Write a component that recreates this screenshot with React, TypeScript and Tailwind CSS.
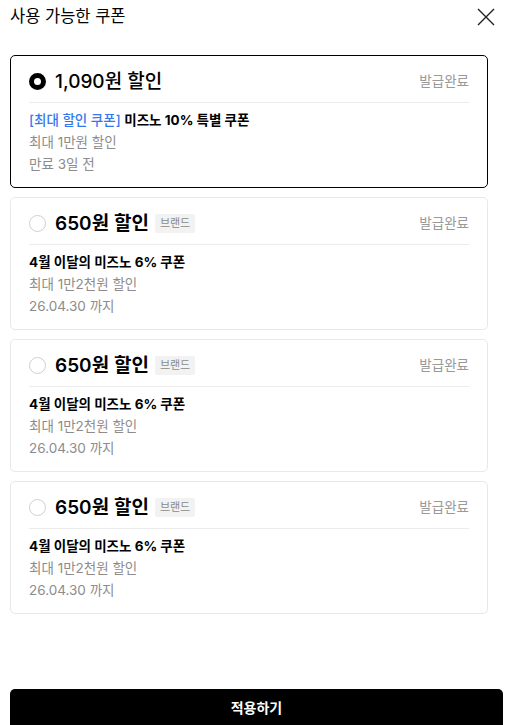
const font = { fontFamily: '"Inter", "Noto Sans CJK KR", sans-serif' };

type Coupon = {
  amount: string;
  brand?: boolean;
  tag?: string;
  name: string;
  limit: string;
  expire: string;
};

const coupons: Coupon[] = [
  { amount: "1,090원 할인", tag: "[최대 할인 쿠폰]", name: "미즈노 10% 특별 쿠폰", limit: "최대 1만원 할인", expire: "만료 3일 전" },
  { amount: "650원 할인", brand: true, name: "4월 이달의 미즈노 6% 쿠폰", limit: "최대 1만2천원 할인", expire: "26.04.30 까지" },
  { amount: "650원 할인", brand: true, name: "4월 이달의 미즈노 6% 쿠폰", limit: "최대 1만2천원 할인", expire: "26.04.30 까지" },
  { amount: "650원 할인", brand: true, name: "4월 이달의 미즈노 6% 쿠폰", limit: "최대 1만2천원 할인", expire: "26.04.30 까지" },
];

const CouponCard = ({ c, selected }: { c: Coupon; selected: boolean }) => {
  return (
    <div
      className={`rounded-[5px] border px-[18px] pt-[9px] pb-[12px] ${
        selected ? "border-black" : "border-[#e8e8e8]"
      }`}
    >
      <div className="flex h-8 items-center">
        {selected ? (
          <span className="h-[17px] w-[17px] rounded-full border-[5px] border-black" />
        ) : (
          <span className="h-[17px] w-[17px] rounded-full border border-[#cfcfcf]" />
        )}
        <span
          className={`ml-[9px] text-[19px] leading-none text-black ${
            selected ? "font-medium" : "font-semibold"
          }`}
        >
          {c.amount}
        </span>
        {c.brand && (
          <span className="ml-[6px] rounded-[2px] bg-[#f2f2f2] px-[5px] py-[2px] text-[11px] leading-[15px] text-[#8a8a8a]">
            브랜드
          </span>
        )}
        <span className="ml-auto text-[13.5px] text-[#999]">발급완료</span>
      </div>
      <div className="mt-[5px] h-px bg-[#ececec]" />
      <div className="pt-[6px] text-[13.5px] leading-[22px]">
        <div className="font-bold text-black">
          {c.tag && <span className="font-medium text-[#3478f0]">{c.tag} </span>}
          {c.name}
        </div>
        <div className="text-[#8c8c8c]">{c.limit}</div>
        <div className="text-[#8c8c8c]">{c.expire}</div>
      </div>
    </div>
  );
};

export default function App() {
  return (
    <div className="relative h-[725px] w-[506px] overflow-hidden bg-white" style={font}>
      <div className="flex h-[33px] items-center justify-between pl-[10px] pr-[10px]">
        <h1 className="text-[16.5px] font-normal text-black">사용 가능한 쿠폰</h1>
        <svg width="18" height="18" viewBox="0 0 18 18" className="mr-[1px]">
          <path d="M1 1 L17 17 M17 1 L1 17" stroke="#222" strokeWidth="1.4" fill="none" />
        </svg>
      </div>
      <div className="mx-[10px] mt-[22px] flex w-[478px] flex-col gap-[9px]">
        {coupons.map((c, i) => (
          <CouponCard key={i} c={c} selected={i === 0} />
        ))}
      </div>
      <button className="absolute bottom-[-12px] left-[10px] h-[48px] w-[493px] rounded-[5px] bg-black pb-[12px] text-[14px] font-semibold text-white">
        적용하기
      </button>
    </div>
  );
}
